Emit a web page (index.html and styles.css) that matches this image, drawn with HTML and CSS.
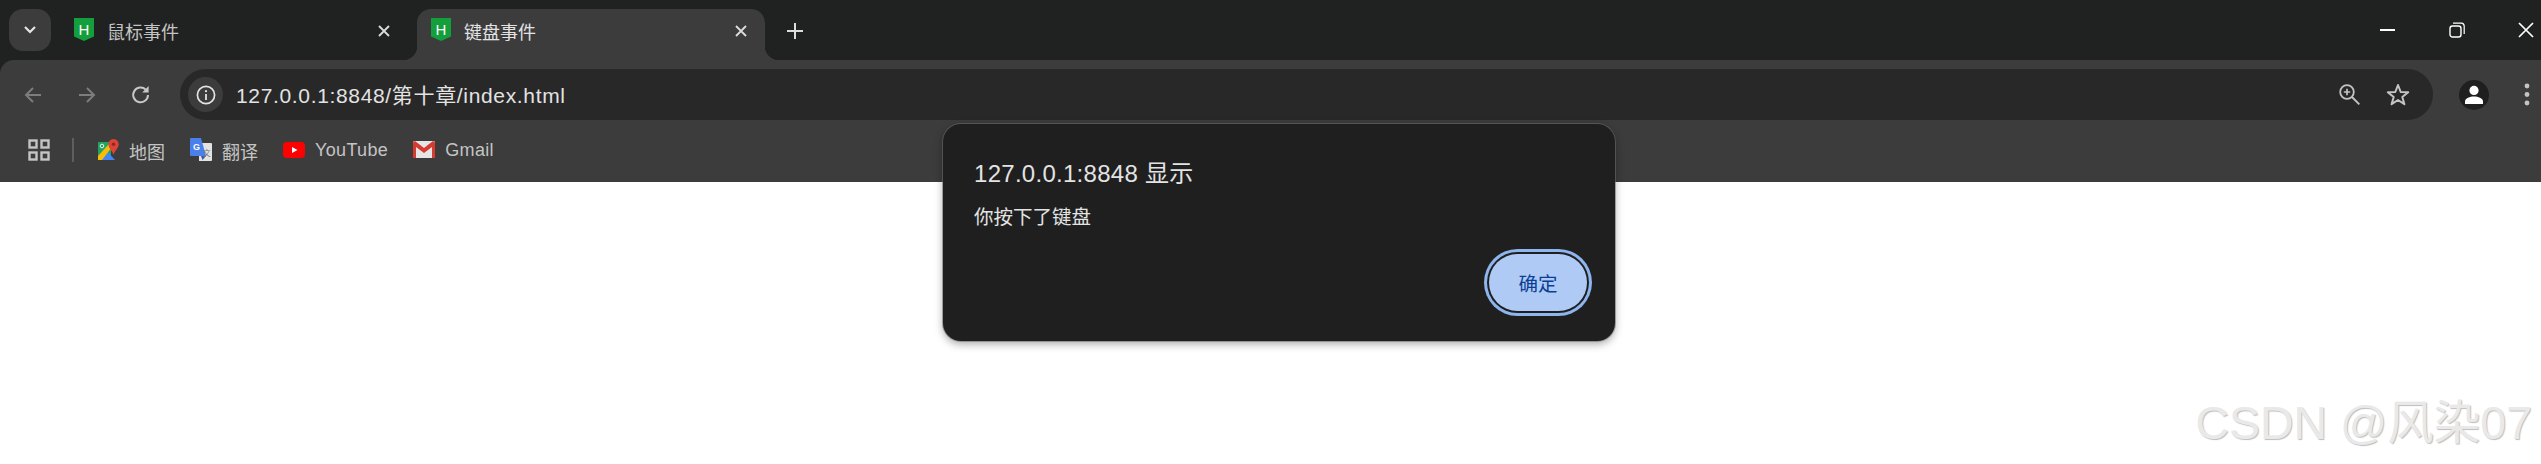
FILE: index.html
```html
<!DOCTYPE html>
<html lang="zh-CN">
<head>
  <meta charset="UTF-8" />
  <meta name="viewport" content="width=device-width, initial-scale=1.0" />
  <title>键盘事件</title>
  <link rel="stylesheet" href="styles.css">
</head>
<body>
  <div class="window">

    <div class="tabstrip">
      <div class="tab-menu">
        <svg width="14" height="10" viewBox="0 0 14 10"><path d="M2 2 7 7 12 2" fill="none" stroke="#e6e6e6" stroke-width="2.2"/></svg>
      </div>
      <div class="tab">
        <svg class="favicon" viewBox="0 0 20 23"><path d="M0 0H20V18.5L10 23 0 18.5Z" fill="#13a03c"/><text x="10" y="17" text-anchor="middle" class="fav-letter">H</text></svg>
        <span class="tab-title">鼠标事件</span>
        <svg class="tab-close" viewBox="0 0 14 14"><path d="M2 2 12 12M12 2 2 12" fill="none" stroke="currentColor" stroke-width="1.8"/></svg>
      </div>
      <div class="tab tab-active">
        <svg class="favicon" viewBox="0 0 20 23"><path d="M0 0H20V18.5L10 23 0 18.5Z" fill="#13a03c"/><text x="10" y="17" text-anchor="middle" class="fav-letter">H</text></svg>
        <span class="tab-title">键盘事件</span>
        <svg class="tab-close" viewBox="0 0 14 14"><path d="M2 2 12 12M12 2 2 12" fill="none" stroke="currentColor" stroke-width="1.8"/></svg>
      </div>
      <svg class="new-tab" width="18" height="18" viewBox="0 0 18 18"><path d="M9 1V17M1 9H17" stroke="#dcdcdc" stroke-width="2"/></svg>
      <div class="win-controls">
        <svg width="16" height="16" viewBox="0 0 16 16"><path d="M0 8H15" stroke="#fff" stroke-width="2"/></svg>
        <svg width="16" height="16" viewBox="0 0 16 16"><rect x="1" y="4" width="11" height="11" rx="2.5" fill="none" stroke="#fff" stroke-width="1.4"/><path d="M4 1.2H12.5A3 3 0 0 1 15.2 4V12" fill="none" stroke="#fff" stroke-width="1.2"/></svg>
        <svg width="16" height="16" viewBox="0 0 16 16"><path d="M1 1 15 15M15 1 1 15" stroke="#fff" stroke-width="1.7"/></svg>
      </div>
    </div>

    <div class="toolbar">
      <div class="nav-btn">
        <svg width="20" height="20" viewBox="0 0 20 20"><path d="M18 10H3M10 3 3 10 10 17" fill="none" stroke="#7d7d7d" stroke-width="2"/></svg>
      </div>
      <div class="nav-btn">
        <svg width="20" height="20" viewBox="0 0 20 20"><path d="M2 10H17M10 3 17 10 10 17" fill="none" stroke="#7d7d7d" stroke-width="2"/></svg>
      </div>
      <div class="nav-btn">
        <svg width="22" height="22" viewBox="0 0 22 22"><path d="M18 11A7.4 7.4 0 1 1 15.8 5.6" fill="none" stroke="#c8c8c8" stroke-width="2"/><path d="M18.6 2V8.4H12.2Z" fill="#c8c8c8"/></svg>
      </div>
      <div class="omnibox">
        <div class="site-info">
          <svg width="20" height="20" viewBox="0 0 20 20"><circle cx="10" cy="10" r="8.6" fill="none" stroke="#e3e3e3" stroke-width="1.7"/><path d="M10 9V15" stroke="#e3e3e3" stroke-width="1.8"/><circle cx="10" cy="6.2" r="1.1" fill="#e3e3e3"/></svg>
        </div>
        <span class="url">127.0.0.1:8848/第十章/index.html</span>
        <div class="omni-actions">
          <svg width="21" height="21" viewBox="0 0 21 21"><circle cx="8" cy="8" r="6.8" fill="none" stroke="#c4c4c4" stroke-width="1.8"/><path d="M13 13 20.3 20.3" stroke="#c4c4c4" stroke-width="1.9"/><path d="M8 4.8V11.2M4.8 8H11.2" stroke="#c4c4c4" stroke-width="1.7"/></svg>
          <svg width="24" height="23" viewBox="0 0 24 23"><path d="M12 2 14.7 9 22.2 9.3 16.3 14 18.4 21.2 12 17 5.6 21.2 7.7 14 1.8 9.3 9.3 9Z" fill="none" stroke="#c4c4c4" stroke-width="2" stroke-linejoin="round"/></svg>
        </div>
      </div>
      <div class="avatar">
        <svg width="20" height="20" viewBox="0 0 20 20"><circle cx="10" cy="5.4" r="4.6" fill="#fff"/><path d="M1 19V16.4C1 13.2 6 11.6 10 11.6S19 13.2 19 16.4V19Z" fill="#fff"/></svg>
      </div>
      <svg class="menu-dots" width="6" height="24" viewBox="0 0 6 24"><circle cx="3" cy="3" r="2.4" fill="#c4c4c4"/><circle cx="3" cy="11.5" r="2.4" fill="#c4c4c4"/><circle cx="3" cy="20" r="2.4" fill="#c4c4c4"/></svg>
    </div>

    <div class="bookmarks">
      <svg class="apps" width="22" height="22" viewBox="0 0 22 22">
        <g fill="none" stroke="#c4c4c4" stroke-width="2.4">
          <rect x="1.5" y="1.5" width="7" height="7"/><rect x="13.5" y="1.5" width="7" height="7"/>
          <rect x="1.5" y="13.5" width="7" height="7"/><rect x="13.5" y="13.5" width="7" height="7"/>
        </g>
      </svg>
      <div class="bm-sep"></div>
      <div class="bm">
        <svg width="21" height="22" viewBox="0 0 21 22">
          <path d="M0 3H13V21H0Z" fill="#1fa463"/>
          <path d="M0 21 8 11 17 21Z" fill="#4285f4"/>
          <path d="M0 21V17L11 5 14 8 4 21Z" fill="#fbbc04"/>
          <circle cx="4" cy="7" r="1.8" fill="none" stroke="#e8f5e9" stroke-width="1"/>
          <path d="M15.5 0A5.2 5.2 0 0 1 20.7 5.2C20.7 9 16.5 11.5 15.5 16 14.5 11.5 10.3 9 10.3 5.2A5.2 5.2 0 0 1 15.5 0Z" fill="#db4437"/>
          <circle cx="15.5" cy="5.2" r="1.8" fill="#8e2a20"/>
        </svg>
        <span>地图</span>
      </div>
      <div class="bm">
        <svg width="22" height="24" viewBox="0 0 22 24">
          <path d="M9 5H21A1 1 0 0 1 22 6V22A1 1 0 0 1 21 23H9Z" fill="#e3e3e3"/>
          <path d="M1 0H11L16 18H1A1 1 0 0 1 0 17V1A1 1 0 0 1 1 0Z" fill="#4a80ec"/>
          <path d="M11 18H16L12.5 22Z" fill="#3a56a8"/>
          <text x="6.5" y="12" text-anchor="middle" class="tr-g">G</text>
          <text x="16.8" y="18" text-anchor="middle" class="tr-w">文</text>
        </svg>
        <span>翻译</span>
      </div>
      <div class="bm bm-latin">
        <svg width="22" height="16" viewBox="0 0 22 16"><rect width="22" height="16" rx="4" fill="#f00"/><path d="M9 5 14.5 8 9 11Z" fill="#fff"/></svg>
        <span>YouTube</span>
      </div>
      <div class="bm bm-latin">
        <svg width="22" height="17" viewBox="0 0 22 17">
          <rect width="22" height="17" rx="1.5" fill="#e6e6e6"/>
          <path d="M0 1.5V17H3V6L11 12 19 6V17H22V1.5L20 0 11 7 2 0Z" fill="#d63b32"/>
        </svg>
        <span>Gmail</span>
      </div>
    </div>

    <div class="page"></div>

    <div class="alert">
      <div class="alert-title">127.0.0.1:8848 显示</div>
      <div class="alert-msg">你按下了键盘</div>
      <div class="alert-actions">
        <button class="alert-ok">确定</button>
      </div>
    </div>

    <div class="watermark">CSDN @风染07</div>
  </div>
</body>
</html>
```

FILE: styles.css
```css
:root {
  --strip: #202221;
  --bar: #3c3c3c;
  --omni: #282828;
  --sans: "Liberation Sans", "Noto Sans CJK SC", sans-serif;
}

html, body {
  margin: 0;
  padding: 0;
  height: 100%;
  overflow: hidden;
  font-family: var(--sans);
}

.window {
  position: relative;
  display: flex;
  flex-direction: column;
  height: 100%;
  background: var(--strip);
}

/* tabs */
.tabstrip {
  display: flex;
  align-items: flex-end;
  height: 60px;
  padding-left: 9px;
  flex-shrink: 0;
}

.tab-menu {
  display: flex;
  align-items: center;
  justify-content: center;
  width: 42px;
  height: 42px;
  margin-bottom: 9px;
  margin-right: 9px;
  border-radius: 14px;
  background: var(--bar);
}

.tab {
  position: relative;
  display: flex;
  align-items: center;
  box-sizing: border-box;
  width: 348px;
  height: 51px;
  margin-right: 9px;
  padding: 0 17px 7px 14px;
  color: #c4c4c4;
  font-size: 18px;
}

.tab-active {
  margin-right: 0;
  background: var(--bar);
  border-radius: 14px 14px 0 0;
  color: #e3e3e3;
}

.tab-active::before,
.tab-active::after {
  content: "";
  position: absolute;
  bottom: 0;
  width: 14px;
  height: 14px;
}

.tab-active::before {
  left: -14px;
  background: radial-gradient(circle at 0 0, transparent 14px, var(--bar) 14.5px);
}

.tab-active::after {
  right: -14px;
  background: radial-gradient(circle at 100% 0, transparent 14px, var(--bar) 14.5px);
}

.favicon {
  width: 20px;
  height: 23px;
  margin-right: 13px;
  margin-top: -3px;
  flex-shrink: 0;
}

.fav-letter {
  font: 15px "Liberation Sans", sans-serif;
  fill: #fff;
}

.tab-close {
  width: 14px;
  height: 14px;
  margin-left: auto;
  margin-top: -1px;
  color: #dcdcdc;
}

.new-tab {
  margin: 0 0 20px 21px;
}

.win-controls {
  display: flex;
  gap: 53px;
  margin-left: auto;
  padding: 0 7px 22px 0;
}

/* address bar */
.toolbar {
  display: flex;
  align-items: center;
  box-sizing: border-box;
  height: 69px;
  padding: 9px 11px 9px 6px;
  background: var(--bar);
  border-radius: 14px 0 0 0;
  flex-shrink: 0;
}

.nav-btn {
  display: flex;
  align-items: center;
  justify-content: center;
  width: 54px;
}

.omnibox {
  display: flex;
  align-items: center;
  flex: 1;
  height: 51px;
  margin-left: 12px;
  padding: 0 23px 0 8px;
  background: var(--omni);
  border-radius: 26px;
}

.site-info {
  display: flex;
  align-items: center;
  justify-content: center;
  width: 35px;
  height: 35px;
  margin-right: 13px;
  border-radius: 50%;
  background: var(--bar);
}

.url {
  margin-top: -2px;
  color: #e3e3e3;
  font-size: 21px;
  letter-spacing: .66px;
}

.omni-actions {
  display: flex;
  align-items: center;
  gap: 26px;
  margin-left: auto;
}

.avatar {
  display: flex;
  align-items: center;
  justify-content: center;
  width: 30px;
  height: 30px;
  margin-left: 26px;
  border-radius: 50%;
  background: #1f1f1f;
}

.menu-dots {
  margin-left: 35px;
}

/* bookmarks */
.bookmarks {
  display: flex;
  align-items: center;
  box-sizing: border-box;
  height: 53px;
  padding: 0 0 12px 28px;
  background: var(--bar);
  color: #c4c4c4;
  font-size: 18px;
  flex-shrink: 0;
}

.bm-sep {
  width: 2px;
  height: 24px;
  margin: 0 24px 0 22px;
  background: #5e5e5e;
}

.bm {
  display: flex;
  align-items: center;
  gap: 10px;
  margin-right: 25px;
}

.bm span {
  margin-top: 3px;
}

.bm-latin {
  margin-right: 25px;
  letter-spacing: .35px;
}

.bm-latin span {
  margin-top: 2px;
}

.tr-g {
  font: bold 9px "Liberation Sans", sans-serif;
  fill: #fff;
}

.tr-w {
  font: 8px "Noto Sans CJK SC", sans-serif;
  fill: #777;
}

.page {
  flex: 1;
  background: #fff;
}

/* alert lies over the browser chrome */
.alert {
  position: absolute;
  top: 124px;
  left: 943px;
  display: flex;
  flex-direction: column;
  box-sizing: border-box;
  width: 672px;
  height: 217px;
  padding: 35px 23px 25px 31px;
  background: #1f1f1f;
  border-radius: 18px;
  box-shadow: 0 0 0 1px rgba(110, 110, 110, .55), 0 3px 9px rgba(0, 0, 0, .35);
  color: #e3e3e3;
}

.alert-title {
  font-size: 24px;
  line-height: 30px;
  letter-spacing: .28px;
}

.alert-msg {
  margin-top: 14px;
  font-size: 19.5px;
  line-height: 28px;
}

.alert-actions {
  display: flex;
  justify-content: flex-end;
  margin-top: auto;
}

.alert-ok {
  width: 98px;
  height: 57px;
  margin: 5px;
  padding: 0;
  border: none;
  border-radius: 29px;
  background: #afcbf5;
  box-shadow: 0 0 0 2px #1f1f1f, 0 0 0 5px #8db5ee;
  color: #0b3f94;
  font-family: var(--sans);
  font-size: 19.5px;
}

.watermark {
  position: absolute;
  right: 9px;
  bottom: 13px;
  color: #e9e9e9;
  font-size: 46.5px;
  line-height: 56px;
  text-shadow: 1px 1px 1px #bdbdbd;
  white-space: nowrap;
}
```
